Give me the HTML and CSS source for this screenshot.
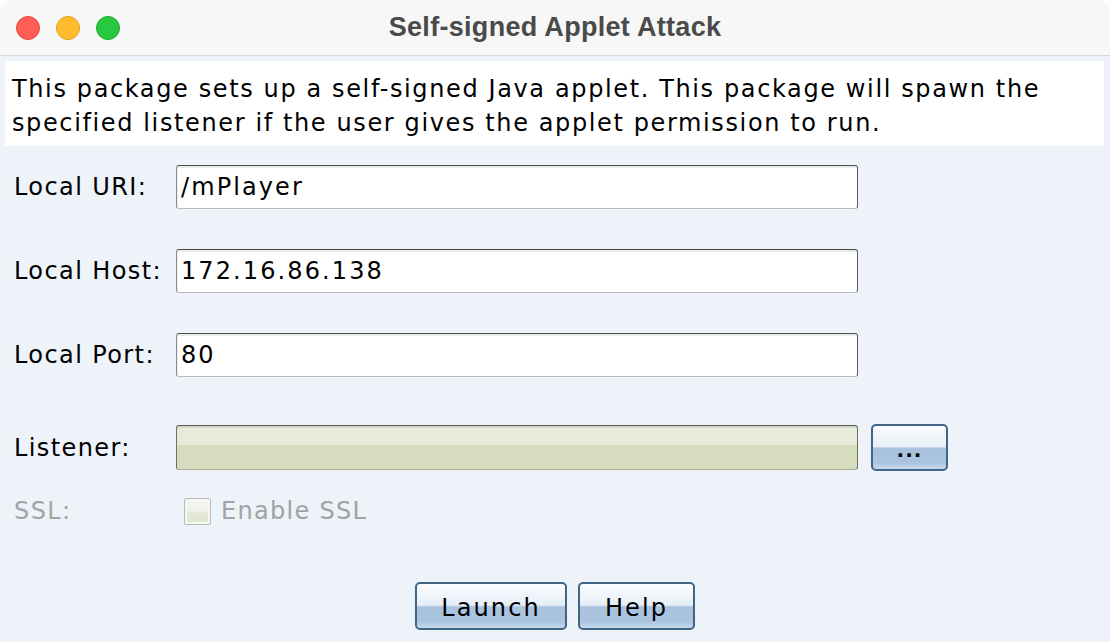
FILE: index.html
```html
<!DOCTYPE html>
<html>
<head>
<meta charset="utf-8">
<link rel="stylesheet" href="styles.css">
</head>
<body>
<div class="window">
  <div class="titlebar">
    <div class="lights">
      <span class="light red"></span>
      <span class="light yellow"></span>
      <span class="light green"></span>
    </div>
    <div class="title">Self-signed Applet Attack</div>
    <div></div>
  </div>
  <div class="content">
    <div class="desc">This package sets up a self-signed Java applet. This package will spawn the specified listener if the user gives the applet permission to run.</div>
    <div class="form">
      <div class="row">
        <label class="lbl">Local URI:</label>
        <div class="field">/mPlayer</div>
      </div>
      <div class="row">
        <label class="lbl">Local Host:</label>
        <div class="field">172.16.86.138</div>
      </div>
      <div class="row">
        <label class="lbl">Local Port:</label>
        <div class="field">80</div>
      </div>
      <div class="row row-listener">
        <label class="lbl">Listener:</label>
        <div class="field field-listener"></div>
        <button class="btn btn-dots">...</button>
      </div>
      <div class="row row-ssl">
        <label class="lbl lbl-disabled">SSL:</label>
        <div class="check">
          <span class="checkbox"></span>
          <span class="check-text">Enable SSL</span>
        </div>
      </div>
    </div>
    <div class="actions">
      <button class="btn btn-launch">Launch</button>
      <button class="btn btn-help">Help</button>
    </div>
  </div>
</div>
</body>
</html>
```

FILE: styles.css
```css
html, body {
  margin: 0;
  padding: 0;
  background: #ffffff;
}

.window {
  width: 1110px;
  height: 642px;
  display: flex;
  flex-direction: column;
  background: #eef2f9;
  border-radius: 12px 12px 0 0;
  overflow: hidden;
  font-family: "DejaVu Sans", "Noto Sans", sans-serif;
  color: #000;
}

.titlebar {
  height: 55px;
  flex: none;
  display: grid;
  grid-template-columns: 1fr auto 1fr;
  align-items: center;
  background: #f7f7f7;
  border-bottom: 1px solid #d8d8d8;
}

.lights {
  display: flex;
  gap: 16px;
  padding-left: 16px;
}

.light {
  width: 22px;
  height: 22px;
  border-radius: 50%;
  border: 1px solid transparent;
}

.red { background: #ff5f57; border-color: #e24b41; }
.yellow { background: #febc2e; border-color: #e1a11a; }
.green { background: #28c840; border-color: #1aab29; }

.title {
  font-family: "Liberation Sans", Arial, sans-serif;
  font-weight: bold;
  font-size: 27px;
  color: #4a4a4a;
  letter-spacing: 0.3px;
  margin-top: 0;
}

.content {
  flex: 1;
  padding: 5px 6px 0 5px;
  display: flex;
  flex-direction: column;
}

.desc {
  background: #ffffff;
  font-size: 24px;
  line-height: 34px;
  letter-spacing: 1.62px;
  padding: 11px 8px 6px 7px;
}

.form {
  display: flex;
  flex-direction: column;
  padding-left: 9px;
  margin-top: 19px;
}

.row {
  display: grid;
  grid-template-columns: 162px 682px 90px;
  align-items: center;
  height: 44px;
}

.row + .row {
  margin-top: 40px;
}

.row.row-listener {
  margin-top: 47px;
  height: 47px;
}

.row.row-ssl {
  margin-top: 26px;
  height: 28px;
}

.lbl {
  font-size: 24px;
  letter-spacing: 1.4px;
  white-space: nowrap;
}

.lbl-disabled {
  color: #a3a5a8;
}

.field {
  box-sizing: border-box;
  height: 44px;
  background: #ffffff;
  border: 1px solid #8a8a8a;
  border-top-color: #4c4c4c;
  border-right-color: #5a5a5a;
  border-bottom-color: #bababa;
  border-radius: 3px;
  box-shadow: inset 0 2px 0 #ececec, inset 1px 0 0 #f0f0f0;
  font-size: 24px;
  letter-spacing: 2.1px;
  line-height: 42px;
  padding-left: 4px;
}

.field-listener {
  height: 45px;
  background: linear-gradient(#e8eadb 0%, #e8eadb 45%, #d8ddc0 45%, #d5dbbb 100%);
  border-color: #6e7262;
  border-top-color: #55594a;
  border-bottom-color: #a9ad99;
  box-shadow: inset 0 2px 0 #d4d7c7;
}

.btn {
  box-sizing: border-box;
  font-family: "DejaVu Sans", "Noto Sans", sans-serif;
  font-size: 24px;
  letter-spacing: 2.1px;
  color: #000;
  border: 2px solid #3f6589;
  border-radius: 5px;
  background: linear-gradient(#fbfcfe 0%, #e6eef7 48%, #a9c3df 52%, #aac4e0 85%, #c8d8ec 100%);
  padding: 4px 0 0 0;
  margin: 0;
  cursor: default;
}

.btn-dots {
  width: 77px;
  height: 47px;
  margin-left: 13px;
  font-weight: bold;
  font-size: 20px;
  letter-spacing: 1px;
  padding-top: 4px;
}

.check {
  display: flex;
  align-items: center;
  padding-left: 8px;
}

.checkbox {
  box-sizing: border-box;
  width: 27px;
  height: 27px;
  border: 1px solid #b8bab5;
  border-radius: 2px;
  background: linear-gradient(#f5f6f2 0%, #f0f2ea 45%, #e4e8d7 55%, #e0e5d1 100%);
  box-shadow: inset 0 0 0 2px #f6f7f3;
}

.check-text {
  margin-left: 10px;
  font-size: 24px;
  letter-spacing: 1.3px;
  color: #a0a2a5;
}

.actions {
  display: flex;
  justify-content: center;
  gap: 11px;
  margin-top: 57px;
  padding-left: 1px;
}

.btn-launch {
  width: 152px;
  height: 48px;
}

.btn-help {
  width: 117px;
  height: 48px;
}
```
